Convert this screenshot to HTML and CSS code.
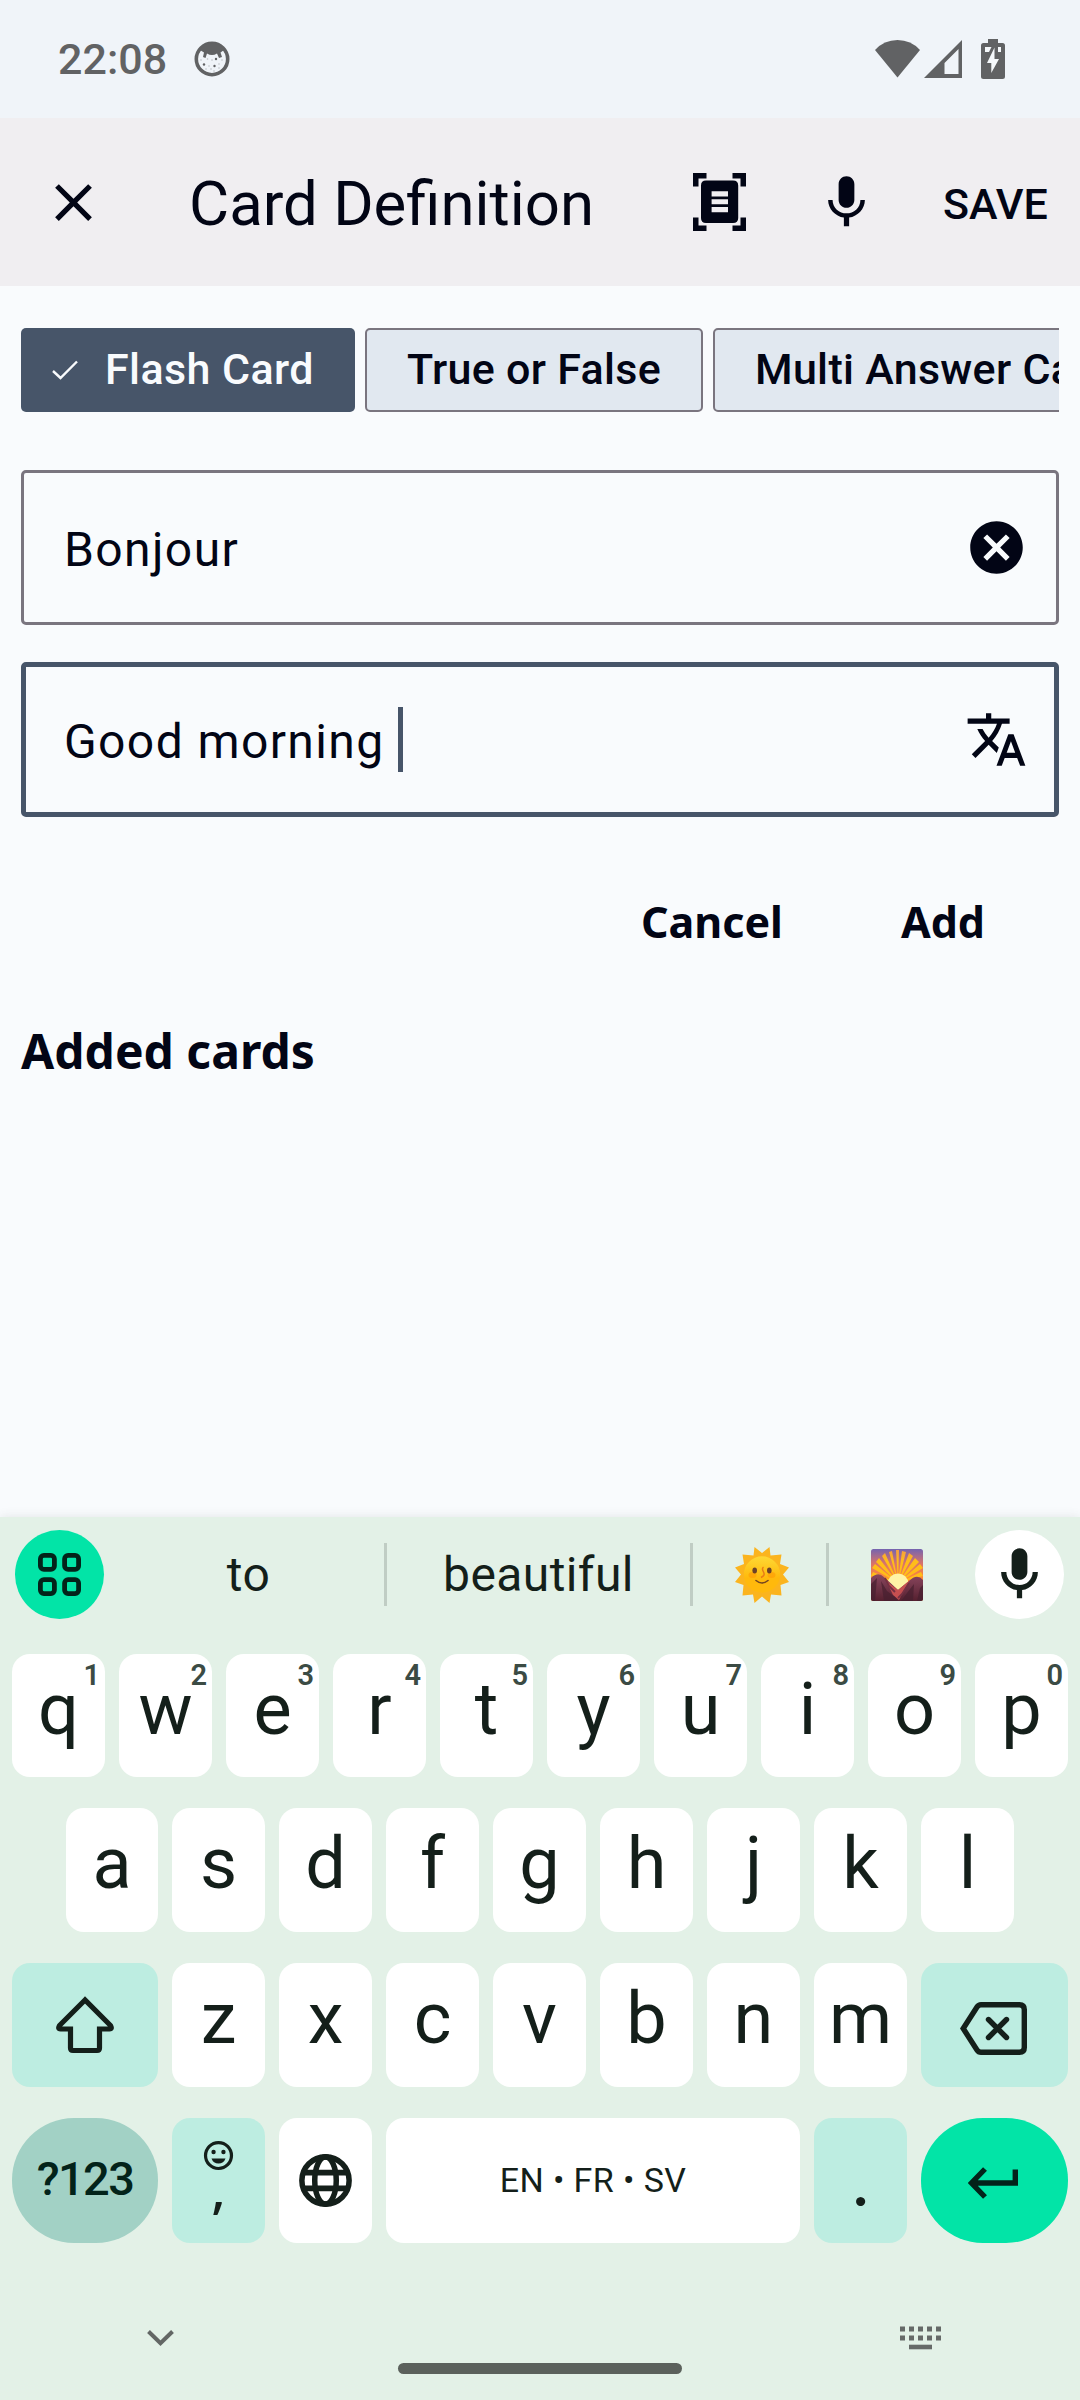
FILE: index.html
```html
<!DOCTYPE html>
<html lang="en">
<head>
<meta charset="utf-8">
<title>Card Definition</title>
<link rel="stylesheet" href="styles.css">
</head>
<body>
<div class="screen">
  <header class="status">
    <span class="clock">22:08</span>
    <svg class="status-face" width="36" height="36" viewBox="0 0 36 36"><circle cx="18" cy="18" r="15.7" fill="none" stroke="#616264" stroke-width="3.6"/><path d="M6 9Q10 2 18 2T30 9L26.500 11.500 28 16 25 17 23 12.500Q18 15.500 13 12.500L11.500 17 9 16 10 11.500Z" fill="#616264"/><g fill="#616264"><circle cx="10" cy="23.500" r="1.200"/><circle cx="20.500" cy="25" r="1.200"/><circle cx="22" cy="18" r="1.200"/><g opacity=".35"><circle cx="7" cy="19" r=".8"/><circle cx="13.500" cy="18" r=".8"/><circle cx="18" cy="19" r=".8"/><circle cx="15" cy="25" r=".8"/><circle cx="25" cy="23" r=".8"/><circle cx="28" cy="19" r=".8"/><circle cx="12" cy="28" r=".8"/><circle cx="17" cy="28" r=".8"/><circle cx="25" cy="27" r=".8"/><circle cx="20" cy="30" r=".8"/></g></g></svg>
    <div class="status-right">
      <svg width="45" height="38" viewBox="0 0 45 38"><path d="M22.500 37.500L0 10Q9 0 22.500 0T45 10Z" fill="#616264"/></svg>
      <svg class="signal" width="38" height="38" viewBox="0 0 38 38"><path d="M0 38L38 0V38ZM20.500 34H34.500V9L20.500 23Z" fill="#616264" fill-rule="evenodd"/></svg>
      <svg class="battery" width="24" height="40" viewBox="0 0 24 40"><path d="M7 0H17V4H21.500Q24 4 24 6.500V37.500Q24 40 21.500 40H2.500Q0 40 0 37.500V6.500Q0 4 2.500 4H7Z" fill="#616264"/><path d="M4 8H10.500L8 13H4ZM17 8H20V13H17ZM13.500 8.500V20H18L10.300 34V24H6Z" fill="#f5f8fb"/></svg>
    </div>
  </header>

  <header class="appbar">
    <svg class="close" width="63" height="63" viewBox="0 0 24 24"><path d="M19 6.410L17.590 5 12 10.590 6.410 5 5 6.410 10.590 12 5 17.590 6.410 19 12 13.410 17.590 19 19 17.590 13.410 12z"/></svg>
    <h1>Card Definition</h1>
    <svg class="scan" width="53" height="58" viewBox="0 0 53 58"><path d="M0 0H13.500V5.500H5.500V13.500H0ZM39.500 0H53V13.500H47.500V5.500H39.500ZM0 44.500H5.500V52.500H13.500V58H0ZM47.500 44.500H53V58H39.500V52.500H47.500Z"/><path fill-rule="evenodd" d="M13 7.500H40Q45.200 7.500 45.200 12.500V45Q45.200 50 40 50H13Q8 50 8 45V12.500Q8 7.500 13 7.500ZM18.600 18.200V23.400H35V18.200ZM18.600 26.200V31.200H35V26.200ZM18.600 34V39.200H35V34Z"/></svg>
    <svg class="mic" width="63" height="63" viewBox="0 0 24 24"><path d="M12 14c1.660 0 2.990-1.340 2.990-3L15 5c0-1.660-1.340-3-3-3S9 3.340 9 5v6c0 1.660 1.340 3 3 3zm5.300-3c0 3-2.540 5.100-5.300 5.100S6.700 14 6.700 11H5c0 3.410 2.720 6.230 6 6.720V21h2v-3.280c3.280-.48 6-3.300 6-6.720h-1.700z"/></svg>
    <span class="save">SAVE</span>
  </header>

  <main class="content">
    <div class="chips">
      <div class="chip selected"><svg width="26" height="20" viewBox="0 0 26 20"><path d="M1 11L8.500 18 25 1.500" fill="none" stroke="#f9fbfd" stroke-width="2.400"/></svg><span>Flash Card</span></div>
      <div class="chip second"><span>True or False</span></div>
      <div class="chip third"><span>Multi Answer Card</span></div>
    </div>
    <div class="field"><span>Bonjour</span>
      <svg width="63" height="63" viewBox="0 0 24 24"><path d="M12 2C6.470 2 2 6.470 2 12s4.470 10 10 10 10-4.470 10-10S17.530 2 12 2zm5 13.590L15.590 17 12 13.410 8.410 17 7 15.590 10.590 12 7 8.410 8.410 7 12 10.590 15.590 7 17 8.410 13.410 12 17 15.590z"/></svg>
    </div>
    <div class="field focused"><span>Good morning</span><i class="caret"></i>
      <svg width="63" height="63" viewBox="0 0 24 24"><path d="M12.870 15.070l-2.540-2.510.03-.03A17.520 17.520 0 0 0 14.070 6H17V4h-7V2H8v2H1v1.990h11.170C11.500 7.920 10.440 9.750 9 11.350 8.070 10.320 7.300 9.190 6.690 8h-2c.73 1.630 1.730 3.170 2.980 4.560l-5.090 5.020L4 19l5-5 3.110 3.110.76-2.040zM18.500 10h-2L12 22h2l1.120-3h4.750L21 22h2l-4.500-12zm-2.620 7l1.620-4.330L19.120 17h-3.240z"/></svg>
    </div>
    <div class="actions"><span>Cancel</span><span>Add</span></div>
    <h2>Added cards</h2>
  </main>

  <section class="keyboard">
    <div class="toolbar">
      <div class="round apps"><svg width="43" height="43" viewBox="0 0 43 43" fill="none" stroke="#03231a" stroke-width="4.800"><rect x="2.400" y="2.400" width="14" height="14" rx="3.500"/><rect x="26.600" y="2.400" width="14" height="14" rx="3.500"/><rect x="2.400" y="26.600" width="14" height="14" rx="3.500"/><rect x="26.600" y="26.600" width="14" height="14" rx="3.500"/></svg></div>
      <div class="suggestions">
        <span>to</span><b></b><span>beautiful</span><b></b>
        <span><svg class="sun" width="54" height="56" viewBox="0 0 54 56">
          <defs><linearGradient id="sunFace" x1="0" y1="0" x2="0" y2="1"><stop offset="0" stop-color="#fdd835"/><stop offset=".6" stop-color="#ffb90c"/></linearGradient></defs>
          <path fill="#fbb41e" d="M27 6L34.500 0 35.500 8.500 46.500 7.500 45 17 54 20.500 48 27.500 54 35 45.500 38 46.500 48.500 36 47.500 34.500 56 27 49.500 19.500 56 18 47.500 7.500 48.500 8.500 38 0 35 6 27.500 0 20.500 9 17 7.500 7.500 18.500 8.500 19.500 0Z"/>
          <circle cx="27" cy="27.500" r="18.200" fill="url(#sunFace)"/><ellipse cx="17.500" cy="28" rx="4" ry="3" fill="#ff8f00" opacity=".45"/><ellipse cx="36.500" cy="28" rx="4" ry="3" fill="#ff8f00" opacity=".45"/>
          <ellipse cx="19.700" cy="23.500" rx="2.300" ry="3" fill="#6d4228"/><ellipse cx="34.300" cy="23.500" rx="2.300" ry="3" fill="#6d4228"/>
          <path d="M28.500 20Q26.500 21.500 28.500 25T26 30.500" fill="none" stroke="#e87b16" stroke-width="1.500"/><path d="M21 33.500Q27 38.500 33 33.500" fill="none" stroke="#754620" stroke-width="1.600" stroke-linecap="round"/></svg></span><b></b>
        <span><svg class="sunrise" width="52" height="52" viewBox="0 0 52 52">
          <defs><linearGradient id="sky" x1="0" y1="0" x2="0" y2="1"><stop offset="0" stop-color="#7464b0"/><stop offset=".28" stop-color="#d8736a"/><stop offset=".55" stop-color="#ff8936"/></linearGradient><linearGradient id="ray" gradientUnits="userSpaceOnUse" x1="0" y1="0" x2="0" y2="30"><stop offset="0" stop-color="#f59a45"/><stop offset=".4" stop-color="#ffbd19"/></linearGradient><linearGradient id="hill" x1="0" y1="0" x2="0" y2="1"><stop offset="0" stop-color="#8a475f"/><stop offset="1" stop-color="#55202f"/></linearGradient><clipPath id="tile"><rect width="52" height="52" rx="2.500"/></clipPath></defs>
          <g clip-path="url(#tile)"><rect width="52" height="52" fill="url(#sky)"/>
          <path fill="url(#ray)" d="M27 34L25 1 28 1ZM27 34L31 2 35 3ZM27 34L38 4 42 7ZM27 34L44 9 48 13ZM27 34L49 15 52 19ZM27 34L50 23 52 27ZM27 34L21 2 18 3ZM27 34L14 4 11 7ZM27 34L8 9 5 13ZM27 34L4 15 1 19ZM27 34L2 23 0 27Z"/>
          <circle cx="27" cy="35" r="10.500" fill="#fff3a6"/>
          <path fill="url(#hill)" d="M0 29Q7 22 13 28L27 41 38 32Q46 24 52 31V52H0Z"/><path fill="#c54f50" d="M14 29L18 34 27 41 39 31 32 43 28 51 22 46Z"/>
          <path fill="#46202f" d="M0 35L6 29 4 52H0ZM10 32L16 42 24 48 27 52H13ZM30 52L39 40 43 35 42 52ZM46 52L49 39 52 36V52Z" opacity=".7"/><path d="M14 29L18 37 24 43M38 34L31 45 27 49" fill="none" stroke="#743043" stroke-width="1.800"/></g></svg></span>
      </div>
      <div class="round voice"><svg width="63" height="63" viewBox="0 0 24 24" fill="#141f1a"><path d="M12 14c1.660 0 3-1.340 3-3V5c0-1.660-1.340-3-3-3S9 3.340 9 5v6c0 1.660 1.340 3 3 3zm5-3c0 2.760-2.240 5-5 5s-5-2.240-5-5H5c0 3.530 2.610 6.430 6 6.920V21h2v-3.080c3.390-.49 6-3.390 6-6.920h-2z"/></svg></div>
    </div>

    <div class="keys">
      <div class="row">
        <div class="key">q<sup>1</sup></div><div class="key">w<sup>2</sup></div><div class="key">e<sup>3</sup></div><div class="key">r<sup>4</sup></div><div class="key">t<sup>5</sup></div><div class="key">y<sup>6</sup></div><div class="key">u<sup>7</sup></div><div class="key">i<sup>8</sup></div><div class="key">o<sup>9</sup></div><div class="key">p<sup>0</sup></div>
      </div>
      <div class="row home">
        <div class="key">a</div><div class="key">s</div><div class="key">d</div><div class="key">f</div><div class="key">g</div><div class="key">h</div><div class="key">j</div><div class="key">k</div><div class="key">l</div>
      </div>
      <div class="row third-row">
        <div class="key wide mint"><svg class="shift" width="60" height="58" viewBox="0 0 60 58"><path d="M30 4L4.500 29.500Q2.500 33 5.500 33H15.500V52Q15.500 54.500 18 54.500H42Q44.500 54.500 44.500 52V33H54.500Q57.500 33 55.500 29.500Z" fill="none" stroke="#141f1a" stroke-width="5.200"/></svg></div>
        <div class="key">z</div><div class="key">x</div><div class="key">c</div><div class="key">v</div><div class="key">b</div><div class="key">n</div><div class="key">m</div>
        <div class="key wide mint right"><svg class="erase" width="67" height="53" viewBox="0 0 67 53" fill="none" stroke="#141f1a" stroke-width="5.400"><path d="M21 2.700H59.500Q64.300 2.700 64.300 7.500V45.500Q64.300 50.300 59.500 50.300H21Q18.500 50.300 17 48L3.200 26.500 17 5Q18.500 2.700 21 2.700Z"/><path d="M28.500 17.500L46.500 35.500M46.500 17.500L28.500 35.500" stroke-linecap="round"/></svg></div>
      </div>
      <div class="row last">
        <div class="key wide symbols">?123</div>
        <div class="key mint comma"><svg width="35" height="35" viewBox="0 0 24 24" fill="#141f1a"><path fill-rule="evenodd" d="M12 2a10 10 0 1 0 0 20 10 10 0 0 0 0-20zm0 2.200a7.800 7.800 0 1 1 0 15.600 7.800 7.800 0 0 1 0-15.600z"/><circle cx="8.600" cy="9.600" r="1.500"/><circle cx="15.400" cy="9.600" r="1.500"/><path d="M7.200 14h9.600q-1.200 3.500-4.800 3.500T7.200 14z"/></svg><span>,</span></div>
        <div class="key globe"><svg width="63" height="63" viewBox="0 0 24 24" fill="none" stroke="#141f1a" stroke-width="2.100"><circle cx="12" cy="12" r="9"/><ellipse cx="12" cy="12" rx="4.100" ry="9"/><path d="M3.600 9H20.400M3.600 15H20.400"/></svg></div>
        <div class="key space">EN • FR • SV</div>
        <div class="key mint period">.</div>
        <div class="key wide enter right"><svg width="50" height="32" viewBox="0 0 50 32"><path d="M47.300 2.500V16H4M17 2L3.500 16 17 30" fill="none" stroke="#03231a" stroke-width="5.400"/></svg></div>
      </div>
    </div>

    <footer class="nav">
      <svg class="down" width="27" height="16" viewBox="0 0 27 16"><path d="M1.500 1.500L13.500 13.200 25.500 1.500" fill="none" stroke="#636765" stroke-width="4"/></svg>
      <div class="pill"></div>
      <svg class="switcher" width="41" height="24" viewBox="0 0 41 24"><path d="M0 3H41M0 12H41" stroke="#666a68" stroke-width="5" stroke-dasharray="5 4"/><path d="M9 21H32" stroke="#666a68" stroke-width="4.600"/></svg>
    </footer>
  </section>
</div>
</body>
</html>
```
FILE: styles.css
```css
* { box-sizing: border-box; }
body { margin: 0; background: #f9fbfd; font-family: Roboto, "Liberation Sans", sans-serif; color: #020515; }
svg { display: block; flex: none; }
h1, h2 { margin: 0; font-weight: 400; white-space: nowrap; }
.screen { width: 1080px; height: 2400px; display: flex; flex-direction: column; overflow: hidden; }

.status { height: 118px; flex: none; display: flex; align-items: center; background: #f0f4f9; padding: 0 75px 0 58px; }
.clock { width: 136px; font-size: 43px; line-height: 60px; color: #616264; font-weight: 500; white-space: nowrap; }
.status-right { margin-left: auto; display: flex; align-items: center; }
.signal { margin-left: 4px; }
.battery { margin-left: 19px; }

.appbar { height: 168px; flex: none; display: flex; align-items: center; background: #f0eef1; padding-left: 42px; }
.appbar svg { fill: #020515; }
.appbar h1 { width: 505px; margin-left: 84px; padding-top: 4px; font-size: 61.7px; line-height: 80px; }
.scan { margin-left: -1px; }
.mic { margin-left: 69px; }
.save { margin-left: 65px; padding-top: 4px; font-size: 43px; font-weight: 500; line-height: 60px; }

.content { flex: 1; padding: 42px 21px 0; }
.chips { display: flex; gap: 10px; overflow: hidden; height: 84px; }
.chip { flex: none; display: flex; align-items: center; height: 84px; border: 2.6px solid #7a757f; border-radius: 5px; background: #e1e8f0; font-size: 43px; font-weight: 500; letter-spacing: .3px; white-space: nowrap; }
.chip span { padding-bottom: 2px; }
.chip.selected { width: 334px; padding-left: 31px; gap: 27px; border: 0; background: #475569; color: #f9fbfd; letter-spacing: .4px; }
.second { width: 338px; padding-left: 40px; }
.third { width: 440px; padding-left: 40px; }

.field { margin-top: 58px; height: 155px; display: flex; align-items: center; border: 3px solid #7a757f; border-radius: 5px; padding: 0 28px 0 40px; font-size: 48px; letter-spacing: 1.4px; }
.field span { padding-top: 3px; }
.field svg { margin-left: auto; fill: #020515; }
.field.focused { margin-top: 37px; border: 5px solid #475569; padding: 0 26px 0 38px; }
.caret { width: 5px; height: 65px; margin-left: 13px; background: #475569; }
.actions { margin-top: 52px; height: 105px; display: flex; align-items: center; justify-content: flex-end; gap: 118px; padding-right: 74px; font: 700 43px "Noto Sans", sans-serif; }
.content h2 { margin-top: 44px; font: 700 48px/66px "Noto Sans", sans-serif; }

.keyboard { height: 883px; flex: none; display: flex; flex-direction: column; background: #e3f1e7; color: #141f1a; box-shadow: 0 0 10px rgba(60, 64, 67, .12); }
.toolbar { height: 115px; flex: none; display: flex; align-items: center; padding: 0 16px 0 15px; }
.round { width: 89px; height: 89px; flex: none; border-radius: 50%; display: flex; align-items: center; justify-content: center; }
.apps { background: #02e4a7; }
.voice { background: #fff; }
.suggestions { width: 871px; display: grid; grid-template-columns: 280px 3px 303px 3px 133px 3px 146px; align-items: center; font-size: 48px; letter-spacing: .4px; }
.suggestions span { display: flex; justify-content: center; }
.suggestions span:first-child { padding-left: 9px; }
.suggestions span:last-child { padding-right: 10px; }
.suggestions b { height: 63px; background: #c0cdc4; }
.sun { margin-left: 4px; }

.keys { flex: none; display: flex; flex-direction: column; gap: 31px; padding: 22px 12px 0; }
.row { height: 123px; display: flex; gap: 14px; }
.row.home { padding: 0 54px; height: 124px; }
.row.third-row { height: 124px; }
.row.last { height: 125px; }
.key { position: relative; flex: none; width: 93px; display: flex; align-items: center; justify-content: center; padding-bottom: 12px; border-radius: 18px; background: #fff; font-size: 72px; line-height: 80px; }
.key sup { position: absolute; top: 7px; right: 5px; font-size: 29px; line-height: 29px; font-weight: 600; color: #3b4b44; }
.home .key:first-child { width: 92px; }
.key.wide { width: 146px; padding-bottom: 0; }
.key.right { width: 147px; }
.key.mint { background: #bdede1; }
.shift { margin-top: 0; }
.erase { margin: 6px 0 0 -2px; }
.key.symbols { background: #a2d1c5; border-radius: 62px; font-size: 47px; font-weight: 500; letter-spacing: -1.6px; padding-bottom: 3px; color: #03231a; }
.key.comma { flex-direction: column; justify-content: flex-start; padding: 20px 0 0; font-family: "Noto Sans", sans-serif; }
.comma span { font-size: 53px; line-height: 53px; font-weight: 500; margin-top: -12px; }
.key.globe { padding: 0; }
.key.space { width: 414px; font-size: 34px; letter-spacing: .4px; padding: 0 0 2px; }
.key.period { font-family: Lato, sans-serif; font-size: 60px; font-weight: 700; padding: 5px 0 0; }
.key.enter { background: #02e4a7; border-radius: 62px; }
.enter svg { margin: 5px 0 0 -3px; }

.nav { flex: 1; display: grid; grid-template-columns: 398px 284px 398px; align-items: start; }
.down { margin: 87px 0 0 147px; }
.pill { height: 11px; margin-top: 120px; border-radius: 6px; background: #5b615c; }
.switcher { margin: 83px 0 0 218px; }
```
